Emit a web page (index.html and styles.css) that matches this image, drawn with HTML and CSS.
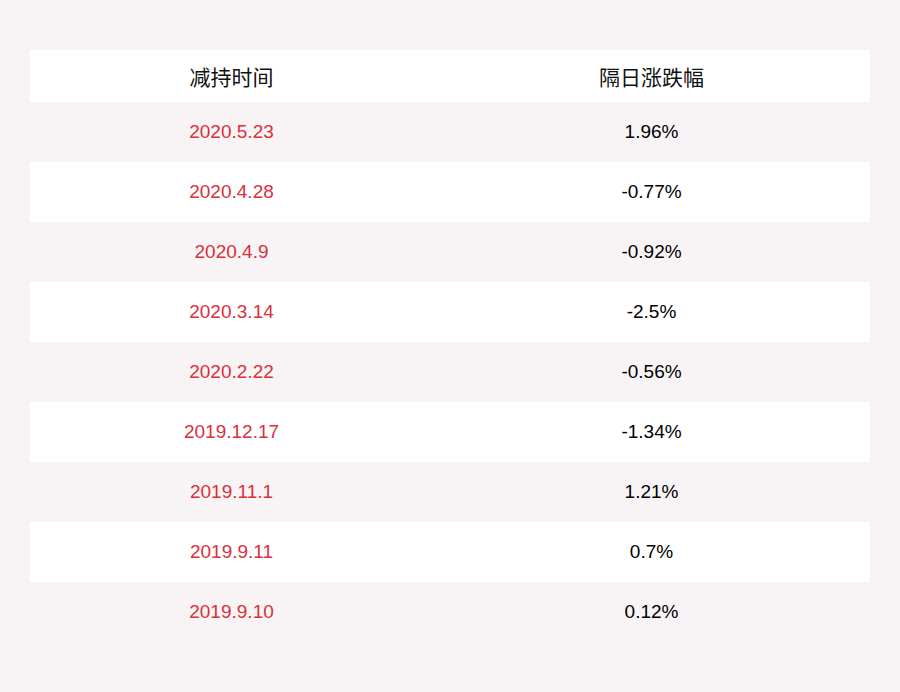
FILE: index.html
```html
<!DOCTYPE html>
<html>
<head>
<meta charset="utf-8">
<link rel="stylesheet" href="styles.css">
</head>
<body>
<div class="table">
  <div class="row head"><div class="cell">减持时间</div><div class="cell">隔日涨跌幅</div></div>
  <div class="row"><div class="cell date">2020.5.23</div><div class="cell">1.96%</div></div>
  <div class="row alt"><div class="cell date">2020.4.28</div><div class="cell">-0.77%</div></div>
  <div class="row"><div class="cell date">2020.4.9</div><div class="cell">-0.92%</div></div>
  <div class="row alt"><div class="cell date">2020.3.14</div><div class="cell">-2.5%</div></div>
  <div class="row"><div class="cell date">2020.2.22</div><div class="cell">-0.56%</div></div>
  <div class="row alt"><div class="cell date">2019.12.17</div><div class="cell">-1.34%</div></div>
  <div class="row"><div class="cell date">2019.11.1</div><div class="cell">1.21%</div></div>
  <div class="row alt"><div class="cell date">2019.9.11</div><div class="cell">0.7%</div></div>
  <div class="row"><div class="cell date">2019.9.10</div><div class="cell">0.12%</div></div>
</div>
</body>
</html>
```

FILE: styles.css
```css
html, body {
  margin: 0;
  padding: 0;
  background: #f8f4f5;
}
body {
  padding: 50px 30px;
  font-family: "Liberation Sans", "Noto Sans CJK SC", sans-serif;
}
.table {
  display: flex;
  flex-direction: column;
}
.row {
  display: grid;
  grid-template-columns: 1fr 1fr;
  height: 60px;
  align-items: center;
  font-size: 19px;
  color: #000;
}
.row.head {
  height: 52px;
  background: #ffffff;
  font-size: 21px;
  color: #111;
}
.row.alt {
  background: #ffffff;
}
.cell {
  text-align: center;
  padding-right: 17px;
}
.date {
  color: #d9303a;
}
```
